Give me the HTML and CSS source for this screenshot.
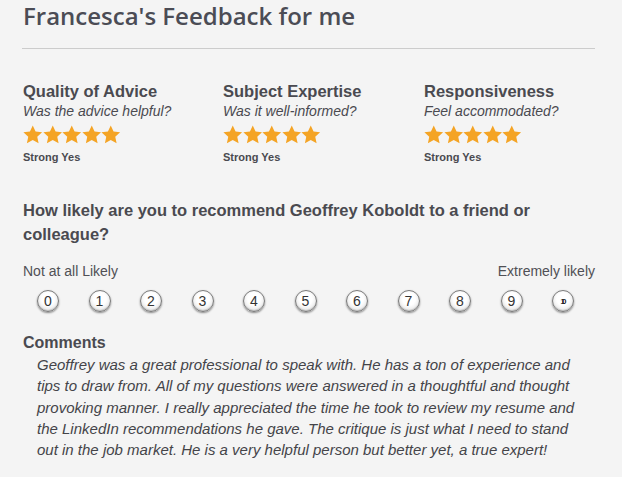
FILE: index.html
```html
<!DOCTYPE html>
<html lang="en">
<head>
    <meta charset="UTF-8">
    <meta name="viewport" content="width=device-width, initial-scale=1.0">
    <title>Francesca's Feedback for me</title>
    <link rel="stylesheet" href="styles.css">
</head>
<body>
    <h1 class="page-title">Francesca's Feedback for me</h1>
    <hr class="divider">

    <div class="ratings">
        <div class="rating">
            <h3>Quality of Advice</h3>
            <p class="question">Was the advice helpful?</p>
            <div class="stars">
                <svg viewBox="0 0 20 19"><polygon points="10,0.3 12.9,6.4 19.6,7.1 14.6,11.7 16,18.6 10,15.1 4,18.6 5.4,11.7 0.4,7.1 7.1,6.4"/></svg>
                <svg viewBox="0 0 20 19"><polygon points="10,0.3 12.9,6.4 19.6,7.1 14.6,11.7 16,18.6 10,15.1 4,18.6 5.4,11.7 0.4,7.1 7.1,6.4"/></svg>
                <svg viewBox="0 0 20 19"><polygon points="10,0.3 12.9,6.4 19.6,7.1 14.6,11.7 16,18.6 10,15.1 4,18.6 5.4,11.7 0.4,7.1 7.1,6.4"/></svg>
                <svg viewBox="0 0 20 19"><polygon points="10,0.3 12.9,6.4 19.6,7.1 14.6,11.7 16,18.6 10,15.1 4,18.6 5.4,11.7 0.4,7.1 7.1,6.4"/></svg>
                <svg viewBox="0 0 20 19"><polygon points="10,0.3 12.9,6.4 19.6,7.1 14.6,11.7 16,18.6 10,15.1 4,18.6 5.4,11.7 0.4,7.1 7.1,6.4"/></svg>
            </div>
            <div class="answer">Strong Yes</div>
        </div>
        <div class="rating">
            <h3>Subject Expertise</h3>
            <p class="question">Was it well-informed?</p>
            <div class="stars">
                <svg viewBox="0 0 20 19"><polygon points="10,0.3 12.9,6.4 19.6,7.1 14.6,11.7 16,18.6 10,15.1 4,18.6 5.4,11.7 0.4,7.1 7.1,6.4"/></svg>
                <svg viewBox="0 0 20 19"><polygon points="10,0.3 12.9,6.4 19.6,7.1 14.6,11.7 16,18.6 10,15.1 4,18.6 5.4,11.7 0.4,7.1 7.1,6.4"/></svg>
                <svg viewBox="0 0 20 19"><polygon points="10,0.3 12.9,6.4 19.6,7.1 14.6,11.7 16,18.6 10,15.1 4,18.6 5.4,11.7 0.4,7.1 7.1,6.4"/></svg>
                <svg viewBox="0 0 20 19"><polygon points="10,0.3 12.9,6.4 19.6,7.1 14.6,11.7 16,18.6 10,15.1 4,18.6 5.4,11.7 0.4,7.1 7.1,6.4"/></svg>
                <svg viewBox="0 0 20 19"><polygon points="10,0.3 12.9,6.4 19.6,7.1 14.6,11.7 16,18.6 10,15.1 4,18.6 5.4,11.7 0.4,7.1 7.1,6.4"/></svg>
            </div>
            <div class="answer">Strong Yes</div>
        </div>
        <div class="rating">
            <h3>Responsiveness</h3>
            <p class="question">Feel accommodated?</p>
            <div class="stars">
                <svg viewBox="0 0 20 19"><polygon points="10,0.3 12.9,6.4 19.6,7.1 14.6,11.7 16,18.6 10,15.1 4,18.6 5.4,11.7 0.4,7.1 7.1,6.4"/></svg>
                <svg viewBox="0 0 20 19"><polygon points="10,0.3 12.9,6.4 19.6,7.1 14.6,11.7 16,18.6 10,15.1 4,18.6 5.4,11.7 0.4,7.1 7.1,6.4"/></svg>
                <svg viewBox="0 0 20 19"><polygon points="10,0.3 12.9,6.4 19.6,7.1 14.6,11.7 16,18.6 10,15.1 4,18.6 5.4,11.7 0.4,7.1 7.1,6.4"/></svg>
                <svg viewBox="0 0 20 19"><polygon points="10,0.3 12.9,6.4 19.6,7.1 14.6,11.7 16,18.6 10,15.1 4,18.6 5.4,11.7 0.4,7.1 7.1,6.4"/></svg>
                <svg viewBox="0 0 20 19"><polygon points="10,0.3 12.9,6.4 19.6,7.1 14.6,11.7 16,18.6 10,15.1 4,18.6 5.4,11.7 0.4,7.1 7.1,6.4"/></svg>
            </div>
            <div class="answer">Strong Yes</div>
        </div>
    </div>

    <h3 class="recommend">How likely are you to recommend Geoffrey Koboldt to a friend or colleague?</h3>

    <div class="scale-labels">
        <span>Not at all Likely</span>
        <span>Extremely likely</span>
    </div>

    <div class="scale">
        <span class="dot">0</span>
        <span class="dot">1</span>
        <span class="dot">2</span>
        <span class="dot">3</span>
        <span class="dot">4</span>
        <span class="dot">5</span>
        <span class="dot">6</span>
        <span class="dot">7</span>
        <span class="dot">8</span>
        <span class="dot">9</span>
        <span class="dot dot-squeezed">10</span>
    </div>

    <h3 class="comments-title">Comments</h3>
    <p class="comment">Geoffrey was a great professional to speak with. He has a ton of experience and tips to draw from. All of my questions were answered in a thoughtful and thought provoking manner. I really appreciated the time he took to review my resume and the LinkedIn recommendations he gave. The critique is just what I need to stand out in the job market. He is a very helpful person but better yet, a true expert!</p>
</body>
</html>
```

FILE: styles.css
```css
body {
    margin: 0;
    padding: 0 27px 0 23px;
    background-color: #f4f4f4;
    font-family: "Liberation Sans", Arial, sans-serif;
    color: #4a4a50;
}
h3 {
    margin: 0;
    font-size: 16.5px;
    line-height: 20px;
    font-weight: bold;
}
.page-title {
    margin: 0;
    font-family: "Open Sans", sans-serif;
    font-weight: 600;
    font-size: 24px;
    line-height: 32px;
    color: #4b4c55;
}
.divider {
    margin: 16px 0 0 -1px;
    border: none;
    border-top: 1px solid #cccccc;
}
.ratings {
    display: grid;
    grid-template-columns: 200px 201px 1fr;
    margin-top: 32px;
}
.question {
    margin: 1px 0 0;
    font-size: 14px;
    line-height: 18px;
    font-style: italic;
}
.stars {
    display: flex;
    margin-top: 5px;
    height: 19px;
}
.stars svg {
    width: 19.5px;
    height: 19px;
    fill: #f4a425;
}
.answer {
    margin-top: 6px;
    font-size: 11px;
    line-height: 14px;
    font-weight: bold;
}
.recommend {
    margin-top: 34px;
    line-height: 24px;
    max-width: 540px;
}
.scale-labels {
    display: flex;
    justify-content: space-between;
    margin-top: 17px;
    font-size: 14px;
    line-height: 16px;
    color: #505055;
}
.scale {
    display: flex;
    justify-content: space-between;
    margin-top: 11px;
    padding: 0 21px 0 14px;
}
.dot {
    display: flex;
    align-items: center;
    justify-content: center;
    width: 20px;
    height: 20px;
    border: 1px solid #7a7a7a;
    border-radius: 50%;
    background: radial-gradient(circle at 50% 40%, #ffffff 40%, #eeeeee 65%, #b8b8b8 100%);
    box-shadow: 0 1px 2px rgba(0, 0, 0, 0.45), inset 0 -1px 1px rgba(0, 0, 0, 0.15);
    font-size: 14px;
    color: #333;
}
.dot-squeezed {
    font-size: 8px;
    font-weight: bold;
    letter-spacing: -3px;
    text-indent: -2px;
    color: #222;
}
.comments-title {
    margin-top: 21px;
    font-size: 16px;
}
.comment {
    margin: 1px 0 0;
    padding: 0 12px 0 14px;
    font-size: 15px;
    line-height: 21.3px;
    font-style: italic;
    color: #444449;
}
```
